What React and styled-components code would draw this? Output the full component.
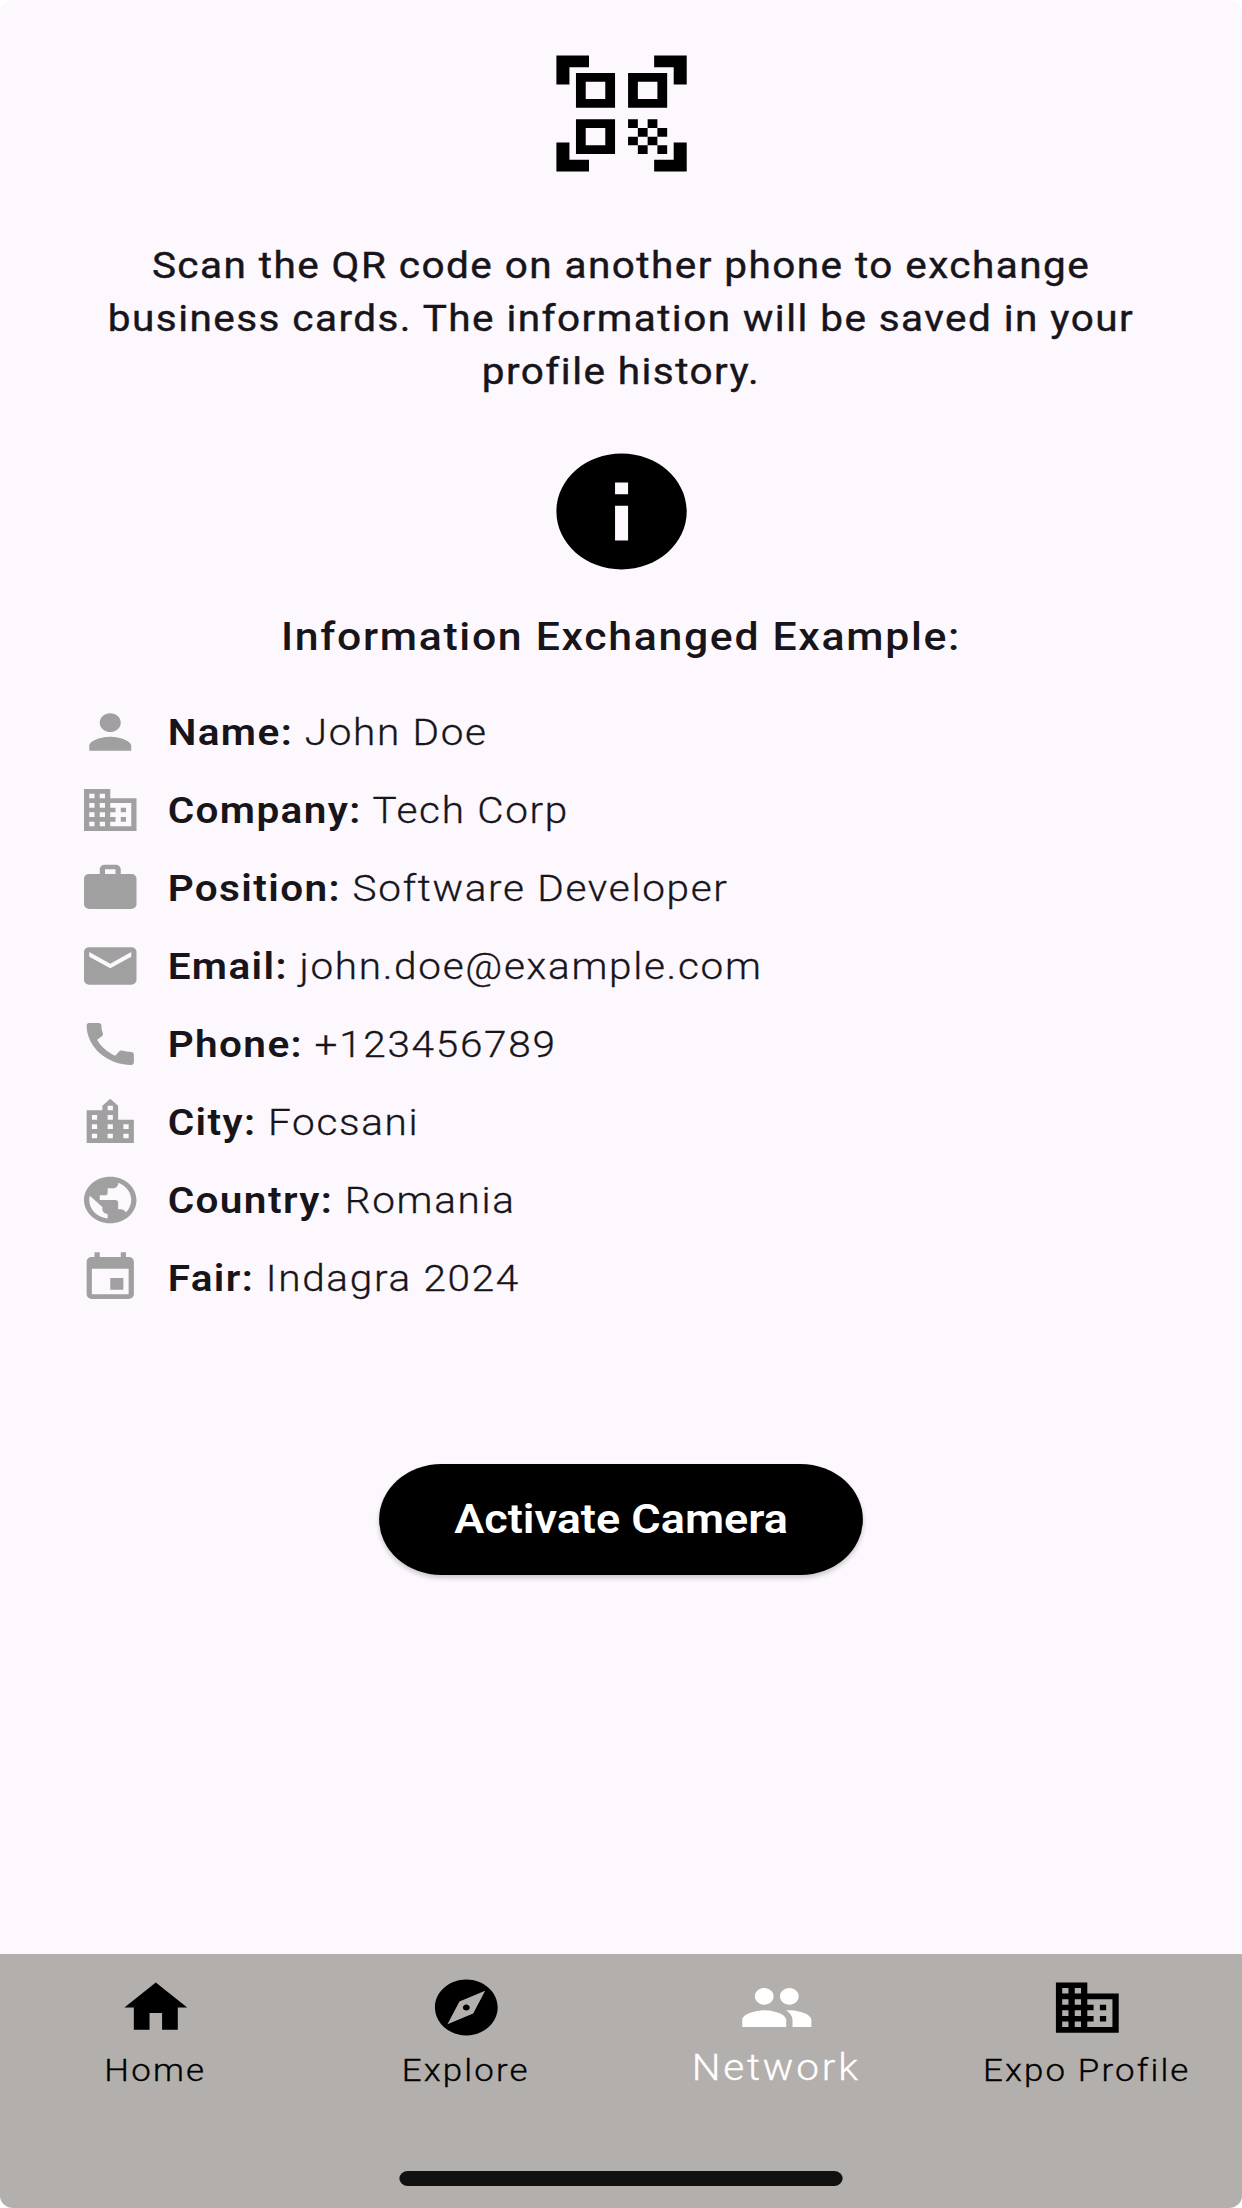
import React from "react";
import styled, { createGlobalStyle } from "styled-components";

const ICONS = {
  qr: "M9.5 6.5v3h-3v-3h3M11 5H5v6h6V5zm-1.5 9.5v3h-3v-3h3M11 13H5v6h6v-6zm6.5-6.5v3h-3v-3h3M19 5h-6v6h6V5zm-6 8h1.5v1.5H13V13zm1.5 1.5H16V16h-1.5v-1.5zM16 13h1.5v1.5H16V13zm-3 3h1.5v1.5H13V16zm1.5 1.5H16V19h-1.5v-1.5zM16 16h1.5v1.5H16V16zm1.5-1.5H19V16h-1.5v-1.5zm0 3H19V19h-1.5v-1.5zM22 7h-2V4h-3V2h5v5zm0 15v-5h-2v3h-3v2h5zM2 22h5v-2H4v-3H2v5zM2 2v5h2V4h3V2H2z",
  info: "M12 2C6.48 2 2 6.48 2 12s4.48 10 10 10 10-4.48 10-10S17.52 2 12 2zm1 15h-2v-6h2v6zm0-8h-2V7h2v2z",
  person: "M12 12c2.21 0 4-1.79 4-4s-1.79-4-4-4-4 1.79-4 4 1.79 4 4 4zm0 2c-2.67 0-8 1.34-8 4v2h16v-2c0-2.66-5.33-4-8-4z",
  domain: "M12 7V3H2v18h20V7H12zM6 19H4v-2h2v2zm0-4H4v-2h2v2zm0-4H4V9h2v2zm0-4H4V5h2v2zm4 12H8v-2h2v2zm0-4H8v-2h2v2zm0-4H8V9h2v2zm0-4H8V5h2v2zm10 12h-8v-2h2v-2h-2v-2h2v-2h-2V9h8v10zm-2-8h-2v2h2v-2zm0 4h-2v2h2v-2z",
  work: "M20 6h-4V4c0-1.11-.89-2-2-2h-4c-1.11 0-2 .89-2 2v2H4c-1.11 0-1.99.89-1.99 2L2 19c0 1.11.89 2 2 2h16c1.11 0 2-.89 2-2V8c0-1.11-.89-2-2-2zm-6 0h-4V4h4v2z",
  email: "M20 4H4c-1.1 0-1.99.9-1.99 2L2 18c0 1.1.9 2 2 2h16c1.1 0 2-.9 2-2V6c0-1.1-.9-2-2-2zm0 4l-8 5-8-5V6l8 5 8-5v2z",
  phone: "M20.01 15.38c-1.23 0-2.42-.2-3.53-.56-.35-.12-.74-.03-1.01.24l-1.57 1.97c-2.83-1.35-5.48-3.9-6.89-6.83l1.95-1.66c.27-.28.35-.67.24-1.02-.37-1.11-.56-2.3-.56-3.53 0-.54-.45-.99-.99-.99H4.19C3.65 3 3 3.24 3 3.99 3 13.28 10.73 21 20.01 21c.71 0 .99-.63.99-1.18v-3.45c0-.54-.45-.99-.99-.99z",
  city: "M15 11V5l-3-3-3 3v2H3v14h18V11h-6zm-8 8H5v-2h2v2zm0-4H5v-2h2v2zm0-4H5V9h2v2zm6 8h-2v-2h2v2zm0-4h-2v-2h2v2zm0-4h-2V9h2v2zm0-4h-2V5h2v2zm6 12h-2v-2h2v2zm0-4h-2v-2h2v2z",
  globe: "M12 2C6.48 2 2 6.48 2 12s4.48 10 10 10 10-4.48 10-10S17.52 2 12 2zm-1 17.93c-3.95-.49-7-3.85-7-7.93 0-.62.08-1.21.21-1.79L9 15v1c0 1.1.9 2 2 2v1.93zm6.9-2.54c-.26-.81-1-1.39-1.9-1.39h-1v-3c0-.55-.45-1-1-1H8v-2h2c.55 0 1-.45 1-1V7h2c1.1 0 2-.9 2-2v-.41c2.93 1.19 5 4.06 5 7.41 0 2.08-.8 3.97-2.1 5.39z",
  event: "M17 12h-5v5h5v-5zM16 1v2H8V1H6v2H5c-1.11 0-1.99.9-1.99 2L3 19c0 1.1.89 2 2 2h14c1.1 0 2-.9 2-2V5c0-1.1-.9-2-2-2h-1V1h-2zm3 18H5V8h14v11z",
  home: "M10 20v-6h4v6h5v-8h3L12 3 2 12h3v8z",
  explore: "M12 10.9c-.61 0-1.1.49-1.1 1.1s.49 1.1 1.1 1.1c.61 0 1.1-.49 1.1-1.1s-.49-1.1-1.1-1.1zM12 2C6.48 2 2 6.48 2 12s4.48 10 10 10 10-4.48 10-10S17.52 2 12 2zm2.19 12.19L6 18l3.81-8.19L18 6l-3.81 8.19z",
  people: "M16 11c1.66 0 2.99-1.34 2.99-3S17.66 5 16 5c-1.66 0-3 1.34-3 3s1.34 3 3 3zm-8 0c1.66 0 2.99-1.34 2.99-3S9.66 5 8 5C6.34 5 5 6.34 5 8s1.34 3 3 3zm0 2c-2.33 0-7 1.17-7 3.5V19h14v-2.5c0-2.33-4.67-3.5-7-3.5zm8 0c-.29 0-.62.02-.97.05 1.16.84 1.97 1.97 1.97 3.45V19h6v-2.5c0-2.33-4.67-3.5-7-3.5z",
};

const details = [
  { icon: "person", label: "Name:", value: "John Doe" },
  { icon: "domain", label: "Company:", value: "Tech Corp" },
  { icon: "work", label: "Position:", value: "Software Developer" },
  { icon: "email", label: "Email:", value: "john.doe@example.com" },
  { icon: "phone", label: "Phone:", value: "+123456789" },
  { icon: "city", label: "City:", value: "Focsani" },
  { icon: "globe", label: "Country:", value: "Romania" },
  { icon: "event", label: "Fair:", value: "Indagra 2024" },
];

const tabs = [
  { icon: "home", label: "Home" },
  { icon: "explore", label: "Explore" },
  { icon: "people", label: "Network", active: true },
  { icon: "domain", label: "Expo Profile" },
];

const Icon = ({ name, size, color }) => (
  <svg width={size} height={size} viewBox="0 0 24 24" fill={color} style={{ flexShrink: 0, display: "block" }}>
    <path d={ICONS[name]} />
  </svg>
);

function App() {
  return (
    <>
      <GlobalStyle />
      <Page>
        <Content>
          <Icon name="qr" size={139} color="#000" />
          <Intro>
            Scan the QR code on another phone to exchange business cards. The information will be saved in your profile history.
          </Intro>
          <Icon name="info" size={139} color="#000" />
          <Heading>Information Exchanged Example:</Heading>
          <DetailList>
            {details.map((item) => (
              <DetailRow key={item.label}>
                <Icon name={item.icon} size={56} color="#a0a0a0" />
                <DetailText>
                  <strong>{item.label}</strong> {item.value}
                </DetailText>
              </DetailRow>
            ))}
          </DetailList>
          <CameraButton>Activate Camera</CameraButton>
        </Content>
        <TabBar>
          <Tabs>
            {tabs.map((tab) => (
              <Tab key={tab.label}>
                <Icon name={tab.icon} size={67} color={tab.active ? "#fff" : "#000"} />
                <TabLabel $active={tab.active}>{tab.label}</TabLabel>
              </Tab>
            ))}
          </Tabs>
          <HomeIndicator />
        </TabBar>
      </Page>
    </>
  );
}

const GlobalStyle = createGlobalStyle`
  html, body {
    margin: 0;
    width: 1242px;
    height: 2208px;
    overflow: hidden;
    background: #ffffff;
    font-family: Roboto, "Liberation Sans", sans-serif;
  }
`;

// the source screenshot is stretched sideways, so the whole page is too
const Page = styled.div`
  width: 1104px;
  height: 2208px;
  display: flex;
  flex-direction: column;
  background: #fdf8fe;
  border-radius: 12px;
  overflow: hidden;
  transform: scaleX(1.125);
  transform-origin: left top;
`;

const Content = styled.main`
  flex: 1;
  display: flex;
  flex-direction: column;
  align-items: center;
  padding-top: 44px;
  color: #17151a;
`;

const Intro = styled.p`
  margin: 57px 0 43px;
  padding: 0 70px;
  font-size: 36px;
  font-weight: 400;
  line-height: 53px;
  letter-spacing: 1.28px;
  text-align: center;
  -webkit-text-stroke: 0.4px #17151a;
`;

const Heading = styled.h2`
  margin: 29px 0 0;
  font-size: 38px;
  font-weight: 500;
  line-height: 54px;
  letter-spacing: 1.5px;
`;

const DetailList = styled.div`
  align-self: stretch;
  display: flex;
  flex-direction: column;
  gap: 22px;
  margin-top: 40px;
  padding-left: 70px;
`;

const DetailRow = styled.div`
  display: flex;
  align-items: center;
  gap: 23px;
  height: 56px;
`;

const DetailText = styled.div`
  padding-top: 2px;
  font-size: 36px;
  font-weight: 300;
  letter-spacing: 1.5px;
  white-space: nowrap;
  -webkit-text-stroke: 0.3px #17151a;

  strong {
    font-weight: 600;
    letter-spacing: 1.25px;
    -webkit-text-stroke: 0;
  }
`;

const CameraButton = styled.button`
  width: 430px;
  height: 111px;
  margin-top: 158px;
  border: none;
  border-radius: 56px;
  background: #000;
  color: #fff;
  font-family: inherit;
  font-size: 40px;
  font-weight: 600;
  box-shadow: 0 3px 5px rgba(0, 0, 0, 0.2);
`;

const TabBar = styled.nav`
  height: 254px;
  display: flex;
  flex-direction: column;
  align-items: center;
  background: #b3afad;
`;

const Tabs = styled.div`
  align-self: stretch;
  display: grid;
  grid-template-columns: repeat(4, 1fr);
  padding-top: 20px;
`;

const Tab = styled.div`
  display: flex;
  flex-direction: column;
  align-items: center;
`;

const TabLabel = styled.span`
  margin-top: ${(p) => (p.$active ? "5px" : "10px")};
  font-size: ${(p) => (p.$active ? "36px" : "31px")};
  line-height: ${(p) => (p.$active ? "44px" : "40px")};
  letter-spacing: ${(p) => (p.$active ? "2.5px" : "1.9px")};
  font-weight: 300;
  -webkit-text-stroke: 0.3px ${(p) => (p.$active ? "#fff" : "#000")};
  color: ${(p) => (p.$active ? "#fff" : "#000")};
  white-space: nowrap;
`;

const HomeIndicator = styled.div`
  width: 394px;
  height: 15px;
  margin-top: auto;
  margin-bottom: 22px;
  border-radius: 8px;
  background: #111;
`;

export default App;
